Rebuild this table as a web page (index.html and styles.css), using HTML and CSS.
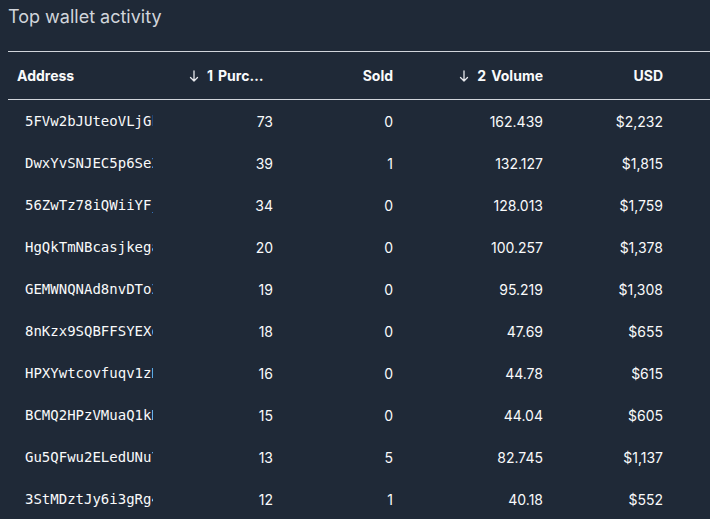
FILE: index.html
```html
<!DOCTYPE html>
<html>
<head>
<meta charset="utf-8">
<link rel="stylesheet" href="styles.css">
</head>
<body>
<h2 class="title">Top wallet activity</h2>
<table class="wallets">
  <colgroup>
    <col class="c-addr"><col class="c-num"><col class="c-num"><col class="c-vol"><col class="c-num"><col class="c-rest">
  </colgroup>
  <thead>
    <tr>
      <th class="h-addr">Address</th>
      <th class="num"><div class="sort"><svg class="arrow" viewBox="0 0 10 12" width="10" height="12"><path d="M5 1v10M1.5 7.5 5 11l3.5-3.5" fill="none" stroke="currentColor" stroke-width="1.3" stroke-linecap="round" stroke-linejoin="round"/></svg><span class="idx">1</span><span class="label short">Purchases</span></div></th>
      <th class="num">Sold</th>
      <th class="num"><div class="sort"><svg class="arrow" viewBox="0 0 10 12" width="10" height="12"><path d="M5 1v10M1.5 7.5 5 11l3.5-3.5" fill="none" stroke="currentColor" stroke-width="1.3" stroke-linecap="round" stroke-linejoin="round"/></svg><span class="idx">2</span><span class="label">Volume</span></div></th>
      <th class="num">USD</th>
      <th></th>
    </tr>
  </thead>
  <tbody>
    <tr><td class="addr"><div class="mono">5FVw2bJUteoVLjGkPq8Rz3</div></td><td class="num">73</td><td class="num">0</td><td class="num">162.439</td><td class="num">$2,232</td><td></td></tr>
    <tr><td class="addr"><div class="mono">DwxYvSNJEC5p6SeZk4Lm</div></td><td class="num">39</td><td class="num">1</td><td class="num">132.127</td><td class="num">$1,815</td><td></td></tr>
    <tr><td class="addr"><div class="mono">56ZwTz78iQWiiYFjH2nd</div></td><td class="num">34</td><td class="num">0</td><td class="num">128.013</td><td class="num">$1,759</td><td></td></tr>
    <tr><td class="addr"><div class="mono">HgQkTmNBcasjkegaP7Xw</div></td><td class="num">20</td><td class="num">0</td><td class="num">100.257</td><td class="num">$1,378</td><td></td></tr>
    <tr><td class="addr"><div class="mono">GEMWNQNAd8nvDToZr5Ks</div></td><td class="num">19</td><td class="num">0</td><td class="num">95.219</td><td class="num">$1,308</td><td></td></tr>
    <tr><td class="addr"><div class="mono">8nKzx9SQBFFSYEXq3Lb</div></td><td class="num">18</td><td class="num">0</td><td class="num">47.69</td><td class="num">$655</td><td></td></tr>
    <tr><td class="addr"><div class="mono">HPXYwtcovfuqv1zR8mT</div></td><td class="num">16</td><td class="num">0</td><td class="num">44.78</td><td class="num">$615</td><td></td></tr>
    <tr><td class="addr"><div class="mono">BCMQ2HPzVMuaQ1kKw9e</div></td><td class="num">15</td><td class="num">0</td><td class="num">44.04</td><td class="num">$605</td><td></td></tr>
    <tr><td class="addr"><div class="mono">Gu5QFwu2ELedUNu7hYp</div></td><td class="num">13</td><td class="num">5</td><td class="num">82.745</td><td class="num">$1,137</td><td></td></tr>
    <tr><td class="addr"><div class="mono">3StMDztJy6i3gRg4VcN</div></td><td class="num">12</td><td class="num">1</td><td class="num">40.18</td><td class="num">$552</td><td></td></tr>
  </tbody>
</table>
</body>
</html>
```

FILE: styles.css
```css
html, body {
  background: #1f2937;
}
body {
  margin: 0;
  padding: 0 0 0 8px;
  overflow: hidden;
  font-family: Inter, "Noto Sans", sans-serif;
  color: #f9fafb;
}
.title {
  margin: 0;
  padding-top: 5px;
  height: 51px;
  box-sizing: border-box;
  font-size: 18px;
  font-weight: 400;
  line-height: 24px;
  color: #d1d5db;
}
.wallets {
  border-collapse: collapse;
  table-layout: fixed;
  width: 702px;
  font-size: 14px;
}
.c-addr { width: 161px; }
.c-num { width: 120px; }
.c-vol { width: 150px; }
.c-rest { width: 31px; }
.wallets thead tr {
  border-top: 1px solid #d1d5db;
  border-bottom: 1px solid #d1d5db;
}
.wallets th {
  height: 47px;
  padding: 0 16px;
  font-weight: 700;
  color: #f9fafb;
  text-align: left;
  white-space: nowrap;
}
.wallets th.h-addr {
  padding-left: 9px;
}
.wallets th.num,
.wallets td.num {
  text-align: right;
}
.sort {
  display: flex;
  align-items: center;
  justify-content: flex-end;
}
.sort .arrow {
  flex: none;
  margin-right: 8px;
  color: #e5e7eb;
}
.sort .idx {
  flex: none;
  margin-right: 5px;
}
.sort .label {
  overflow: hidden;
  text-overflow: ellipsis;
  white-space: nowrap;
}
.sort .label.short {
  width: 52px;
  text-align: left;
  margin-right: 3px;
}
.wallets td {
  height: 42px;
  padding: 0 16px;
  color: #f9fafb;
}
.wallets td.addr {
  padding-left: 17px;
}
.mono {
  width: 128px;
  overflow: hidden;
  white-space: nowrap;
  font-family: "DejaVu Sans Mono", monospace;
  font-size: 14px;
  color: #f9fafb;
}
```
